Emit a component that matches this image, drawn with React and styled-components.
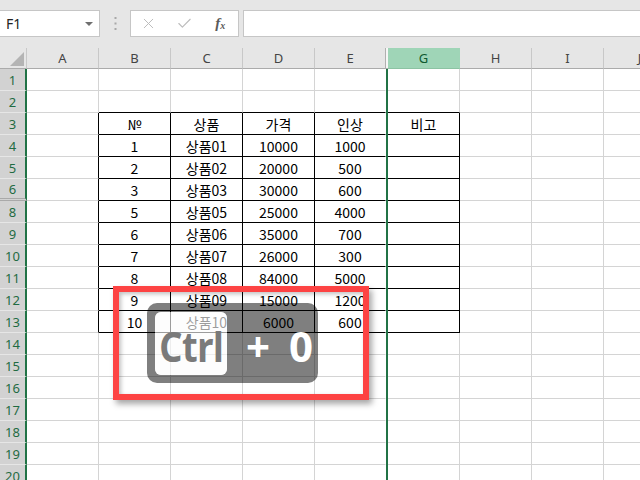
import styled, { createGlobalStyle } from "styled-components";
import { X, Check } from "lucide-react";

const GlobalStyle = createGlobalStyle`
  html, body { margin: 0; padding: 0; background: #fff; }
  body {
    width: 640px;
    height: 480px;
    overflow: hidden;
    font-family: "Noto Sans", "Noto Sans CJK KR", sans-serif;
  }
`;

// F is the hidden column: only the 2px selection line is left of it
const COLS = [
  { key: "A", w: 72 },
  { key: "B", w: 72 },
  { key: "C", w: 72 },
  { key: "D", w: 72 },
  { key: "E", w: 71 },
  { key: "F", w: 2 },
  { key: "G", w: 72 },
  { key: "H", w: 72 },
  { key: "I", w: 72 },
  { key: "J", w: 72 },
];
const TEMPLATE = `27px ${COLS.map((c) => c.w + "px").join(" ")}`;

const ROWS = [1, 2, 3, 4, 5, 6, 8, 9, 10, 11, 12, 13, 14, 15, 16, 17, 18, 19, 20];

// values for B, C, D, E, (F), G
const TABLE = {
  3: ["№", "상품", "가격", "인상", "", "비고"],
  4: ["1", "상품01", "10000", "1000"],
  5: ["2", "상품02", "20000", "500"],
  6: ["3", "상품03", "30000", "600"],
  8: ["5", "상품05", "25000", "4000"],
  9: ["6", "상품06", "35000", "700"],
  10: ["7", "상품07", "26000", "300"],
  11: ["8", "상품08", "84000", "5000"],
  12: ["9", "상품09", "15000", "1200"],
  13: ["10", "상품10", "6000", "600"],
};
const TABLE_COLS = ["B", "C", "D", "E", "F", "G"];

const inTable = (row, col) => row >= 3 && row <= 13 && TABLE_COLS.includes(col);

export default function App() {
  return (
    <Root>
      <GlobalStyle />
      <TopBar>
        <NameBox>
          F1
          <Caret />
        </NameBox>
        <Grip>
          <svg width="3" height="13" viewBox="0 0 3 13">
            <rect x="0.5" y="0" width="2" height="2" fill="#a8a8a8" />
            <rect x="0.5" y="5.5" width="2" height="2" fill="#a8a8a8" />
            <rect x="0.5" y="11" width="2" height="2" fill="#a8a8a8" />
          </svg>
        </Grip>
        <FuncBox>
          <FuncSlot>
            <X size={17} strokeWidth={1.4} color="#bcbcbc" />
          </FuncSlot>
          <FuncSlot>
            <Check size={17} strokeWidth={1.6} color="#bcbcbc" />
          </FuncSlot>
          <FuncSlot>
            <Fx>
              f<sub>x</sub>
            </Fx>
          </FuncSlot>
        </FuncBox>
        <FormulaInput />
      </TopBar>

      <Sheet>
        <HeaderRow>
          <Corner>
            <svg width="14" height="14" viewBox="0 0 14 14">
              <polygon points="14,0 14,14 0,14" fill="#b4b4b4" />
            </svg>
          </Corner>
          {COLS.map((c) =>
            c.key === "F" ? (
              <HiddenHead key={c.key} />
            ) : (
              <ColHead key={c.key} $active={c.key === "G"}>
                {c.key}
              </ColHead>
            )
          )}
        </HeaderRow>

        {ROWS.map((r, ri) => {
          const next = ROWS[ri + 1];
          const data = TABLE[r] || [];
          return (
            <SheetRow key={r}>
              <RowHead $hiddenBelow={r === 6}>{r}</RowHead>
              {COLS.map((c, ci) => {
                if (c.key === "F") return <SelectLine key={c.key} />;
                const nextCol = COLS[ci + 1] ? COLS[ci + 1].key : null;
                const right =
                  c.key === "E"
                    ? "transparent"
                    : inTable(r, c.key) || inTable(r, nextCol)
                    ? "#000"
                    : "#d4d4d4";
                const bottom =
                  inTable(r, c.key) || inTable(next, c.key) ? "#000" : "#d4d4d4";
                const idx = TABLE_COLS.indexOf(c.key);
                return (
                  <Cell key={c.key} $right={right} $bottom={bottom}>
                    {idx >= 0 ? data[idx] : ""}
                  </Cell>
                );
              })}
            </SheetRow>
          );
        })}
      </Sheet>

      <Frame />
      <Plate>
        <Key>
          <KeyLabel>Ctrl</KeyLabel>
        </Key>
        <Sym>+</Sym>
        <Sym>0</Sym>
      </Plate>
    </Root>
  );
}

const Root = styled.div`
  position: relative;
  width: 640px;
  height: 480px;
  overflow: hidden;
  background: #fff;
`;

const TopBar = styled.div`
  height: 48px;
  box-sizing: border-box;
  padding-top: 10px;
  background: #e6e6e6;
  display: flex;
  align-items: flex-start;
`;

const NameBox = styled.div`
  width: 101px;
  height: 27px;
  margin-left: -1px;
  box-sizing: border-box;
  background: #fff;
  border: 1px solid #c6c6c6;
  display: flex;
  align-items: center;
  justify-content: space-between;
  padding: 0 6px 0 6px;
  font-size: 14px;
  color: #222;
`;

const Caret = styled.span`
  width: 0;
  height: 0;
  border-left: 4px solid transparent;
  border-right: 4px solid transparent;
  border-top: 4px solid #6f6f6f;
`;

const Grip = styled.div`
  width: 30px;
  height: 27px;
  display: flex;
  align-items: center;
  justify-content: center;
`;

const FuncBox = styled.div`
  width: 109px;
  height: 27px;
  box-sizing: border-box;
  background: #fff;
  border: 1px solid #c6c6c6;
  margin-right: 4px;
  display: flex;
  align-items: center;
`;

const FuncSlot = styled.div`
  width: 36px;
  height: 100%;
  display: flex;
  align-items: center;
  justify-content: center;
`;

const Fx = styled.span`
  font-family: "Liberation Serif", "DejaVu Serif", serif;
  font-style: italic;
  font-weight: bold;
  font-size: 15px;
  color: #5a5a5a;
  line-height: 1;
  sub {
    font-size: 10px;
    vertical-align: baseline;
    position: relative;
    top: 1px;
  }
`;

const FormulaInput = styled.div`
  flex: 1;
  height: 27px;
  box-sizing: border-box;
  background: #fff;
  border: 1px solid #c6c6c6;
  border-right: none;
`;

const Sheet = styled.div`
  display: flex;
  flex-direction: column;
`;

const HeaderRow = styled.div`
  display: grid;
  grid-template-columns: ${TEMPLATE};
  height: 21px;
  background: #e6e6e6;
`;

const Corner = styled.div`
  box-sizing: border-box;
  border-right: 1px solid #c8c8c8;
  border-bottom: 1px solid #ababab;
  display: flex;
  align-items: flex-end;
  justify-content: flex-end;
  padding: 0 2px 2px 0;
`;

const ColHead = styled.div`
  box-sizing: border-box;
  border-right: 1px solid ${(p) => (p.$active ? "#9fd5b7" : "#c8c8c8")};
  border-bottom: 1px solid ${(p) => (p.$active ? "#8cc3a3" : "#ababab")};
  background: ${(p) => (p.$active ? "#9fd5b7" : "transparent")};
  color: ${(p) => (p.$active ? "#0f5a30" : "#444")};
  font-size: 13px;
  display: flex;
  align-items: center;
  justify-content: center;
  &:nth-child(6) {
    border-right-color: #b0b0b0;
  }
`;

const HiddenHead = styled.div`
  background: #f6f6f6;
  border-bottom: 1px solid #ababab;
`;

const SheetRow = styled.div`
  display: grid;
  grid-template-columns: ${TEMPLATE};
  height: 22px;
`;

const RowHead = styled.div`
  box-sizing: border-box;
  background: #d2d2d2;
  color: #1f6b42;
  font-size: 13px;
  border-right: 2px solid #217346;
  border-bottom: ${(p) => (p.$hiddenBelow ? "3px double #a9a9a9" : "1px solid #e6e6e6")};
  display: flex;
  align-items: center;
  justify-content: center;
`;

const Cell = styled.div`
  box-sizing: border-box;
  border-right: 1px solid ${(p) => p.$right};
  border-bottom: 1px solid ${(p) => p.$bottom};
  font-family: "Noto Sans CJK KR", "Noto Sans", sans-serif;
  font-size: 14px;
  color: #000;
  display: flex;
  align-items: center;
  justify-content: center;
  white-space: nowrap;
  overflow: hidden;
`;

const SelectLine = styled.div`
  background: #217346;
`;

const Frame = styled.div`
  position: absolute;
  left: 113px;
  top: 286px;
  width: 256px;
  height: 114px;
  box-sizing: border-box;
  border: 6px solid #fd4343;
  box-shadow: 3px 4px 6px rgba(0, 0, 0, 0.35), inset 2px 2px 4px rgba(0, 0, 0, 0.25);
`;

const Plate = styled.div`
  position: absolute;
  left: 147px;
  top: 303px;
  width: 171px;
  height: 80px;
  box-sizing: border-box;
  padding-left: 8px;
  border-radius: 10px;
  overflow: hidden;
  display: flex;
  align-items: center;
  gap: 19px;
`;

const Key = styled.div`
  width: 72px;
  height: 63px;
  flex: none;
  border-radius: 6px;
  background: rgba(252, 252, 252, 0.62);
  box-shadow: 0 0 0 300px rgba(0, 0, 0, 0.5);
  display: flex;
  align-items: center;
  justify-content: center;
`;

const KeyLabel = styled.span`
  display: inline-block;
  font-family: "Noto Sans", sans-serif;
  font-weight: bold;
  font-size: 42px;
  line-height: 1;
  padding-top: 6px;
  color: #7a7a7a;
  letter-spacing: -0.5px;
  transform: scaleX(0.86);
`;

const Sym = styled.span`
  width: 24px;
  flex: none;
  text-align: center;
  font-family: "Noto Sans", sans-serif;
  font-weight: bold;
  font-size: 42px;
  line-height: 1;
  padding-top: 6px;
  color: #fff;
`;
